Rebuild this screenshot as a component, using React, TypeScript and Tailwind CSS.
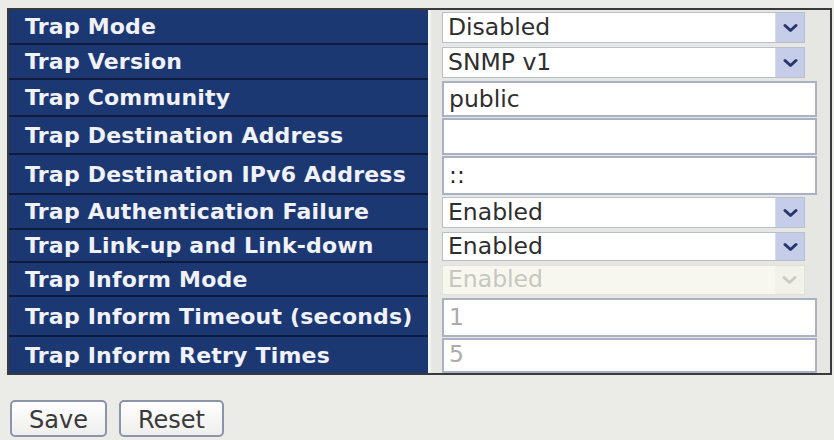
type Field = {
  label: string;
  h: number;
  kind: "select" | "input";
  value: string;
  disabled?: boolean;
};

const fields: Field[] = [
  { label: "Trap Mode", h: 35, kind: "select", value: "Disabled" },
  { label: "Trap Version", h: 35, kind: "select", value: "SNMP v1" },
  { label: "Trap Community", h: 37, kind: "input", value: "public" },
  { label: "Trap Destination Address", h: 38, kind: "input", value: "" },
  { label: "Trap Destination IPv6 Address", h: 40, kind: "input", value: "::" },
  { label: "Trap Authentication Failure", h: 35, kind: "select", value: "Enabled" },
  { label: "Trap Link-up and Link-down", h: 33, kind: "select", value: "Enabled" },
  { label: "Trap Inform Mode", h: 34, kind: "select", value: "Enabled", disabled: true },
  { label: "Trap Inform Timeout (seconds)", h: 40, kind: "input", value: "1", disabled: true },
  { label: "Trap Inform Retry Times", h: 36, kind: "input", value: "5", disabled: true },
];

function Chevron({ muted }: { muted?: boolean }) {
  return (
    <svg width="15" height="10" viewBox="0 0 15 10">
      <path
        d="M2 2.5 L7.5 7.5 L13 2.5"
        fill="none"
        stroke={muted ? "#cacac3" : "#26356c"}
        strokeWidth="3"
        strokeLinecap="round"
        strokeLinejoin="round"
      />
    </svg>
  );
}

function FakeSelect({ value, disabled, h }: { value: string; disabled?: boolean; h: number }) {
  return (
    <div
      className={
        disabled
          ? "flex w-[363px] items-stretch border border-[#e2e2da] bg-[#f8f7ef] text-[#c7c7bf]"
          : "flex w-[363px] items-stretch border border-[#b7bfd0] bg-white text-[#2e2e2e]"
      }
      style={{ height: h - 4 }}
    >
      <span className="flex flex-1 items-center pl-[5px]">{value}</span>
      <span
        className={
          disabled
            ? "flex w-[29px] items-center justify-center bg-[#f3f2ea]"
            : "flex w-[29px] items-center justify-center border-l border-[#d7dcee] bg-[#c6cde9]"
        }
      >
        <Chevron muted={disabled} />
      </span>
    </div>
  );
}

function TextBox({ value, disabled, h }: { value: string; disabled?: boolean; h: number }) {
  return (
    <input
      readOnly
      value={value}
      className={
        disabled
          ? "w-[375px] border-2 border-[#a9b1c3] bg-white px-[5px] text-[#ababab] outline-none"
          : "w-[375px] border-2 border-[#a9b1c3] bg-white px-[5px] text-[#2e2e2e] outline-none"
      }
      style={{ height: h - 1 }}
    />
  );
}

export default function App() {
  return (
    <div className="h-[440px] w-[834px] overflow-hidden bg-[#ebebe7] pt-[8px] font-['DejaVu_Sans',Verdana,sans-serif]">
      {/* settings table */}
      <div className="ml-[7px] w-[825px] border-2 border-[#3a3a3a]">
        {fields.map((f, i) => (
          <div key={f.label} className="flex" style={{ height: f.h }}>
            <div
              className={
                i < fields.length - 1
                  ? "flex w-[419px] items-center border-b-2 border-[#0e1b3e] bg-[#1c3873] pl-[16px] text-[22px] font-bold tracking-[0.2px] text-[#f1f2f8]"
                  : "flex w-[419px] items-center bg-[#1c3873] pl-[16px] text-[22px] font-bold tracking-[0.2px] text-[#f1f2f8]"
              }
            >
              {f.label}
            </div>
            <div className="flex flex-1 items-center border-l-[3px] border-[#f4f4f1] bg-[#e6e6e2] pl-[11px] text-[23.5px]">
              {f.kind === "select" ? (
                <FakeSelect value={f.value} disabled={f.disabled} h={f.h} />
              ) : (
                <TextBox value={f.value} disabled={f.disabled} h={f.h} />
              )}
            </div>
          </div>
        ))}
      </div>

      {/* actions */}
      <div className="ml-[10px] mt-[25px] flex gap-[12px] text-[24px] text-[#3a3a3a]">
        <button className="h-[37px] w-[97px] rounded-[5px] border-2 border-[#8b94a8] bg-gradient-to-b from-white to-[#eeeeec]">
          Save
        </button>
        <button className="h-[37px] w-[105px] rounded-[5px] border-2 border-[#8b94a8] bg-gradient-to-b from-white to-[#eeeeec]">
          Reset
        </button>
      </div>
    </div>
  );
}
